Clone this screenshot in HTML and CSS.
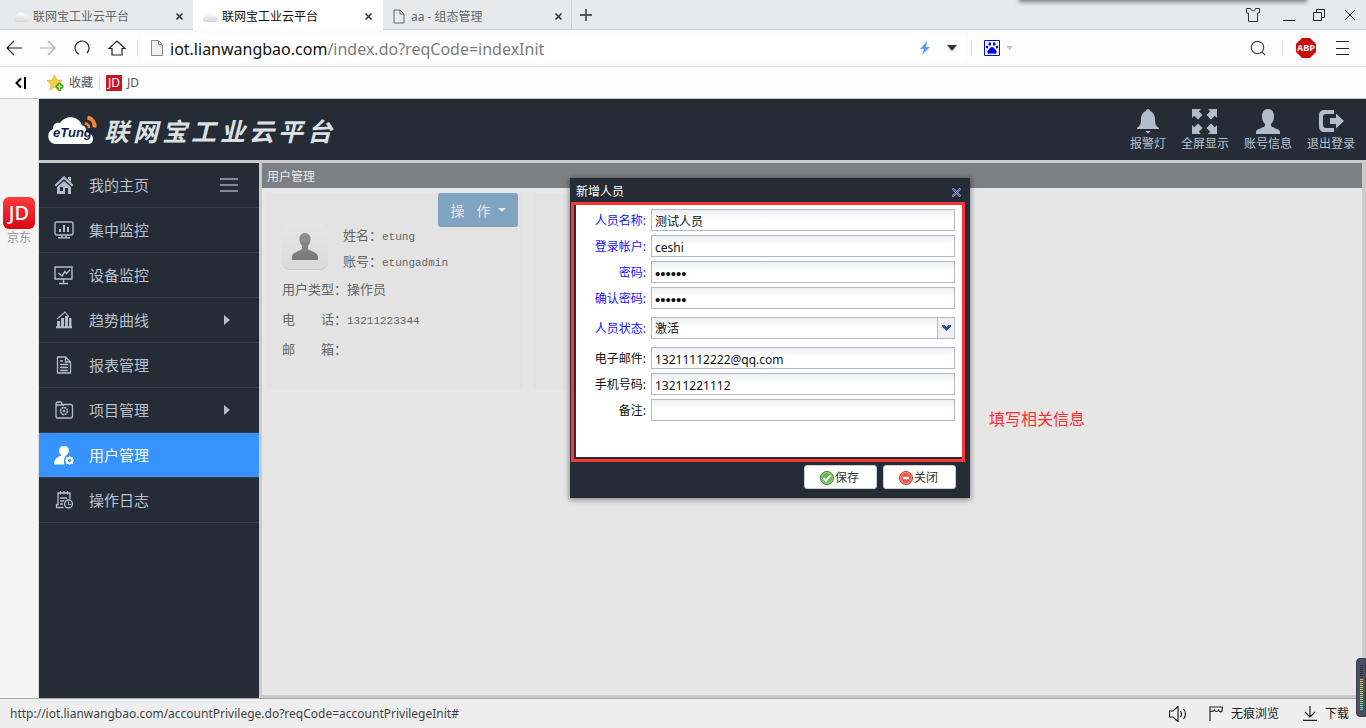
FILE: index.html
```html
<!DOCTYPE html>
<html lang="zh-CN">
<head>
<meta charset="utf-8">
<title>联网宝工业云平台</title>
<link rel="stylesheet" href="styles.css">
</head>
<body>
<div class="browser">
  <div class="tabstrip">
    <div class="tab">
      <svg class="cloud-ico" viewBox="0 0 18 12"><path d="M4 11a3 3 0 0 1-.5-5.500A5 5 0 0 1 13 4.500a3.300 3.300 0 0 1 1.500 6.500z" fill="url(#cg)"/><defs><linearGradient id="cg" x1="0" y1="0" x2="0" y2="1"><stop offset="0" stop-color="#fff"/><stop offset="1" stop-color="#d6d6d6"/></linearGradient></defs></svg>
      <span class="tab-title">联网宝工业云平台</span>
      <button class="tab-close" aria-label="关闭标签"><svg width="9" height="9" viewBox="0 0 9 9"><path d="M1.500 1.500l6 6M7.500 1.500l-6 6" stroke="#333" stroke-width="1.600"/></svg></button>
    </div>
    <div class="tab tab-active">
      <svg class="cloud-ico" viewBox="0 0 18 12"><path d="M4 11a3 3 0 0 1-.5-5.500A5 5 0 0 1 13 4.500a3.300 3.300 0 0 1 1.500 6.500z" fill="url(#cg)"/></svg>
      <span class="tab-title">联网宝工业云平台</span>
      <button class="tab-close" aria-label="关闭标签"><svg width="9" height="9" viewBox="0 0 9 9"><path d="M1.500 1.500l6 6M7.500 1.500l-6 6" stroke="#333" stroke-width="1.600"/></svg></button>
    </div>
    <div class="tab tab-last">
      <svg class="page-ico" viewBox="0 0 12 15"><path d="M1 1h6l4 4v9H1zM7 1v4h4" fill="none" stroke="#666"/></svg>
      <span class="tab-title">aa - 组态管理</span>
      <button class="tab-close" aria-label="关闭标签"><svg width="9" height="9" viewBox="0 0 9 9"><path d="M1.500 1.500l6 6M7.500 1.500l-6 6" stroke="#333" stroke-width="1.600"/></svg></button>
    </div>
    <button class="new-tab" aria-label="新建标签"><svg width="12" height="12" viewBox="0 0 12 12"><path d="M6 0v12M0 6h12" stroke="#555" stroke-width="1.800"/></svg></button>
    <div class="window-tools">
      <button aria-label="皮肤"><svg width="16" height="16" viewBox="0 0 16 16"><path d="M1.500 1.500h4c.5 3 4.500 3 5 0h4v4.500h-2v8.500h-9V6h-2z" fill="none" stroke="#333"/></svg></button>
      <button aria-label="最小化"><svg width="12" height="14" viewBox="0 0 12 14"><path d="M0 12.500h12" stroke="#222"/></svg></button>
      <button aria-label="还原"><svg width="13" height="13" viewBox="0 0 13 13"><path d="M.5 3.500h8v8h-8zM3.500 3.500v-3h8v8h-3" fill="none" stroke="#222"/></svg></button>
      <button aria-label="关闭窗口"><svg width="12" height="12" viewBox="0 0 12 12"><path d="M1 1l10 10M11 1L1 11" stroke="#222"/></svg></button>
    </div>
    <div class="top-shadow"></div>
  </div>

  <div class="toolbar">
    <div class="nav-tools">
      <button aria-label="后退"><svg width="16" height="16" viewBox="0 0 16 16"><path d="M8 1L1 8l7 7M1 8h15" fill="none" stroke="#222" stroke-width="1.200"/></svg></button>
      <button aria-label="前进"><svg width="16" height="16" viewBox="0 0 16 16"><path d="M8 1l7 7-7 7M0 8h15" fill="none" stroke="#aaa" stroke-width="1.200"/></svg></button>
      <button aria-label="刷新"><svg width="16" height="16" viewBox="0 0 16 16"><path d="M5 14.300A7 7 0 1 1 13 13" fill="none" stroke="#222" stroke-width="1.200"/></svg></button>
      <button aria-label="主页"><svg width="18" height="16" viewBox="0 0 18 16"><path d="M1 8.500l8-7.500 8 7.500h-3V15H4V8.500z" fill="none" stroke="#222" stroke-width="1.200"/></svg></button>
    </div>
    <div class="address">
      <svg width="12" height="16" viewBox="0 0 12 16"><path d="M.5.500h7l4 4v11H.5zM7.500.500v4h4" fill="#f0f0f0" stroke="#888"/></svg>
      <div class="url" role="textbox" aria-label="地址" contenteditable="true" spellcheck="false"><span class="host">iot.lianwangbao.com</span>/index.do?reqCode=indexInit</div>
      <svg class="bolt" width="10" height="14" viewBox="0 0 10 14"><path d="M7 0L0 8h4l-2 6 8-8H6z" fill="#4da3ff"/></svg>
      <svg width="10" height="6" viewBox="0 0 10 6"><path d="M0 0h10L5 6z" fill="#333"/></svg>
    </div>
    <div class="search">
      <svg width="16" height="16" viewBox="0 0 16 16"><path d="M.5.500h15v15H.5z" fill="#fff" stroke="#00f"/><g fill="#00f"><path d="M8 7c2 0 2.500 2 4 3.200 1.400 1.200.5 3.800-1.500 3.500-1.800-.3-3.200-.3-5 0-2 .3-2.900-2.300-1.500-3.500C5.500 9 6 7 8 7z"/><ellipse cx="5.800" cy="4" rx="1.400" ry="1.700"/><ellipse cx="10.200" cy="4" rx="1.400" ry="1.700"/><ellipse cx="3" cy="7" rx="1.200" ry="1.500"/><ellipse cx="13" cy="7" rx="1.200" ry="1.500"/></g></svg>
      <svg width="7" height="4" viewBox="0 0 7 4"><path d="M0 0h7L3.500 4z" fill="#bcc6dc"/></svg>
      <input type="search" aria-label="搜索">
      <button aria-label="搜索"><svg width="16" height="16" viewBox="0 0 16 16"><circle cx="7.500" cy="7.500" r="6.200" fill="none" stroke="#444" stroke-width="1.200"/><path d="M12 12l3 3" stroke="#444" stroke-width="1.200"/></svg></button>
    </div>
    <div class="ext-tools">
      <button aria-label="ABP"><svg width="20" height="20" viewBox="0 0 20 20"><path d="M6 0h8l6 6v8l-6 6H6l-6-6V6z" fill="#cb0b0b"/><text x="10" y="13" text-anchor="middle" class="abp">ABP</text></svg></button>
      <button aria-label="菜单"><svg width="13" height="14" viewBox="0 0 13 14"><path d="M0 .5h13M0 7.500h13M0 13.500h13" stroke="#222"/></svg></button>
    </div>
  </div>

  <div class="bookmarks">
    <button class="collapse" aria-label="收起"><svg width="11" height="12" viewBox="0 0 11 12"><path d="M6 1.500L1.500 6 6 10.500M10 0v12" fill="none" stroke="#000" stroke-width="2"/></svg></button>
    <a href="#" class="fav"><svg width="17" height="16" viewBox="0 0 17 16"><path d="M7.500 0l2.300 5 5.200.5-4 3.600L12.200 15 7.500 12 2.800 15 4 9.200 0 5.600l5.200-.6z" fill="#fbcf4c" stroke="#dba62e" stroke-width=".7"/><path d="M11 8h3v2h2v3h-2v2.500h-3V13H9v-3h2z" fill="#68bf30" stroke="#338a18" stroke-width=".7"/><path d="M12.500 9.500v5M10 11.500h5" stroke="#d2f6b3"/></svg>收藏</a>
    <a href="#" class="jd-link"><span class="jd-small">JD</span>JD</a>
  </div>

  <div class="stage">
    <aside class="rail">
      <a href="#" class="rail-app"><span class="jd-big">JD</span>京东</a>
    </aside>

    <div class="app">
      <header class="app-head">
        <div class="brand">
          <svg class="logo" width="52" height="32" viewBox="0 0 52 32"><path d="M7 30a8 8 0 0 1-1-15C6 10 9 8 13 9 18 1 31 1 35 11c3 1 5 4 4 7 4 1 7 3 7 7 0 3-2 5-5 5z" fill="#fff"/><text x="6" y="23" class="logo-text">eTung</text><circle cx="41" cy="23" r="1" fill="#7886a5"/><path d="M37.500 9.500c3 0 4.500 1.500 4.500 4.500" fill="none" stroke="#f58534" stroke-width="2.600"/><path d="M40.500 3.500c5 1 7.500 5 7 10" fill="none" stroke="#f58534" stroke-width="4"/></svg>
          <h1 class="brand-name"><span>联</span><span>网</span><span>宝</span><span>工</span><span>业</span><span>云</span><span>平</span><span>台</span></h1>
        </div>
        <nav class="head-tools">
          <a href="#"><svg width="24" height="25" viewBox="0 0 24 25"><path d="M12 0c1 0 2 .8 2 2 3 1 5 4 5 8 0 5 1 7 4 9v1H1v-1c3-2 4-4 4-9 0-4 2-7 5-8 0-1.200 1-2 2-2zM9.500 22h5L12 24.500z"/></svg>报警灯</a>
          <a href="#"><svg width="25" height="25" viewBox="0 0 25 25"><path d="M0 0h9L6.800 2.200l3.700 3.800-4.500 4.500-3.800-3.700L0 9zM25 0v9l-2.200-2.200-3.800 3.700L14.500 6l3.700-3.800L16 0zM0 25v-9l2.200 2.200L6 14.500l4.500 4.500-3.700 3.800L9 25zM25 25h-9l2.200-2.200-3.700-3.800 4.500-4.500 3.800 3.700L25 16z"/></svg>全屏显示</a>
          <a href="#"><svg width="24" height="25" viewBox="0 0 24 25"><path d="M12 0c4 0 6 3 6 7 0 4-1 6-3 8v2c2 2 9 3 9 6v2H0v-2c0-3 7-4 9-6v-2C7 13 6 11 6 7c0-4 2-7 6-7z"/></svg>账号信息</a>
          <a href="#"><svg width="26" height="24" viewBox="0 0 26 24"><path d="M16 1H7C3 1 1 3 1 6v11c0 4 2 6 6 6h9v-4H8c-2 0-3-1-3-3V8c0-2 1-3 3-3h8z"/><path d="M12 9h6V4.500l8 7.500-8 7.500V15h-6z"/></svg>退出登录</a>
        </nav>
      </header>

      <div class="app-body">
        <nav class="side">
          <a href="#" class="item"><svg class="mi" viewBox="0 0 20 20"><path d="M10 1l9.500 9-1.500 1.500-8-7.500-8 7.500L.5 10zM14 2h3v5l-3-3z" fill="#b2bcca"/><path d="M10 6l7 6v7h-3v-6h-3v6H3v-7zM6 12v4h3v-4z" fill="#b2bcca" fill-rule="evenodd"/></svg><span>我的主页</span><svg width="18" height="14" viewBox="0 0 18 14"><path d="M0 1h18M0 7h18M0 13h18" stroke="#a0a8b4" stroke-width="1.500"/></svg></a>
          <a href="#" class="item"><svg class="mi" viewBox="0 0 20 20"><path d="M3 2h14q2 0 2 2v9q0 2-2 2H3q-2 0-2-2V4q0-2 2-2zM4 17.700h12M8 15v3M12 15v3" fill="none" stroke="#b2bcca" stroke-width="1.400"/><path d="M6 12V9M10 12V5M14 12V7" stroke="#b2bcca" stroke-width="2"/></svg><span>集中监控</span></a>
          <a href="#" class="item"><svg class="mi" viewBox="0 0 20 20"><path d="M1 2h17v12H1zM9.500 14v4M5 18.500h9M4.500 8L8 11l3-4.500 1.500 2L16 5" fill="none" stroke="#b2bcca" stroke-width="1.400"/></svg><span>设备监控</span></a>
          <a href="#" class="item"><svg class="mi" viewBox="0 0 20 20"><path d="M2 17.300h16" stroke="#b2bcca" stroke-width="2"/><path d="M3 17v-6h3v6zM7 17V8h3v9zM11 17V6h3v11zM15 17V8h2.500v9z" fill="#b2bcca"/><path d="M3 9l7-6 1-1 4 5" fill="none" stroke="#b2bcca" stroke-width="1.100"/></svg><span>趋势曲线</span><svg class="arrow" width="6" height="10" viewBox="0 0 6 10"><path d="M0 0l6 5-6 5z" fill="#b2bcca"/></svg></a>
          <a href="#" class="item"><svg class="mi" viewBox="0 0 20 20"><path d="M3.500 2h8l5 5v11h-13zM11.500 2v5h5M6 6h3M6 9.500h8M6 12.500h8M6 15.500h8" fill="none" stroke="#b2bcca" stroke-width="1.300"/></svg><span>报表管理</span></a>
          <a href="#" class="item"><svg class="mi" viewBox="0 0 20 20"><path d="M2 5.500V4q0-2 2-2h3l1.500 2.500H17q1.500 0 1.500 2V16q0 2-2 2H3.500Q2 18 2 16zM2 5h8" fill="none" stroke="#b2bcca" stroke-width="1.300"/><circle cx="10" cy="11" r="3.500" fill="none" stroke="#b2bcca" stroke-width="1.500" stroke-dasharray="2.200 .5"/><circle cx="10" cy="11" r="1.300" fill="#b2bcca"/></svg><span>项目管理</span><svg class="arrow" width="6" height="10" viewBox="0 0 6 10"><path d="M0 0l6 5-6 5z" fill="#b2bcca"/></svg></a>
          <a href="#" class="item item-on"><svg class="mi" viewBox="0 0 20 20"><path d="M10 1c3 0 5 2 5 4.500S13 10 11.500 11c-1 2-2 4-1 8.500H0c0-5 3-8 7.500-9C6 9 5 7.500 5 5.500 5 3 7 1 10 1z" fill="#fff"/><circle cx="15.500" cy="15.500" r="2.600" fill="none" stroke="#fff" stroke-width="2"/><path d="M15.500 11v1.500M15.500 18.500V20M11 15.500h1.500M18.500 15.500H20M12.300 12.300l1 1M17.700 17.700l1 1M18.700 12.300l-1 1M12.300 18.700l1-1" stroke="#fff" stroke-width="1.700"/></svg><span>用户管理</span></a>
          <a href="#" class="item"><svg class="mi" viewBox="0 0 20 20"><path d="M9.500 17.500h-7v-3H4V3h12v6M6.500 1v3.500M10 1v3.500M13.500 1v3.500M6 8h7M6 11h4M6 14h3" fill="none" stroke="#b2bcca" stroke-width="1.300"/><circle cx="14.500" cy="14" r="4" fill="none" stroke="#b2bcca" stroke-width="1.400"/><path d="M14.500 11.500v3h2.500" fill="none" stroke="#b2bcca"/></svg><span>操作日志</span></a>
        </nav>

        <main class="panel">
          <h2 class="panel-title">用户管理</h2>
          <div class="cards">
            <section class="card">
              <button class="op"><span>操</span><span>作</span><svg width="8" height="4" viewBox="0 0 8 4"><path d="M0 0h8L4 4z" fill="#e6e6e6"/></svg></button>
              <div class="who">
                <div class="avatar"><svg width="26" height="27" viewBox="0 0 26 27"><path d="M13 0c4 0 6 3 5.500 7-.3 3-1.500 5-2.500 6v3c2 2 10 3 10 8v3H0v-3c0-5 8-6 10-8v-3c-1-1-2.200-3-2.500-6C7 3 9 0 13 0z" fill="url(#ag)"/><defs><linearGradient id="ag" x1="0" y1="0" x2="0" y2="1"><stop offset="0" stop-color="#929292"/><stop offset="1" stop-color="#777"/></linearGradient></defs></svg></div>
                <div class="who-text"><p>姓名：<span class="mono">etung</span></p><p>账号：<span class="mono">etungadmin</span></p></div>
              </div>
              <p class="line">用户类型：操作员</p>
              <p class="line">电　　话：<span class="mono">13211223344</span></p>
              <p class="line">邮　　箱：</p>
            </section>
            <section class="card"></section>
          </div>
        </main>
      </div>

      <form class="dialog" role="dialog" aria-labelledby="dlg-title">
        <div class="dlg-head"><h3 id="dlg-title">新增人员</h3><button type="button" aria-label="关闭对话框"><svg width="9" height="9" viewBox="0 0 9 9"><path d="M.5.500l8 8M8.500.500l-8 8" stroke="#8fa3e6" stroke-width="2.200"/><path d="M1 1l7 7M8 1L1 8" stroke="#252c36" stroke-width=".7"/></svg></button></div>
        <div class="dlg-body">
          <div class="row req"><label for="f1">人员名称:</label><input id="f1" type="text" value="测试人员"></div>
          <div class="row req"><label for="f2">登录帐户:</label><input id="f2" type="text" value="ceshi"></div>
          <div class="row req"><label for="f3">密码:</label><input id="f3" type="password" value="123456"></div>
          <div class="row req"><label for="f4">确认密码:</label><input id="f4" type="password" value="123456"></div>
          <div class="row req row-combo"><label for="f5">人员状态:</label><div class="combo"><select id="f5"><option>激活</option></select><span class="combo-btn"><svg width="9" height="6" viewBox="0 0 9 6"><path d="M0 0h2.500l2 2 2-2H9v1.500L4.500 6 0 1.500z" fill="#2f4f8f"/></svg></span></div></div>
          <div class="row"><label for="f6">电子邮件:</label><input id="f6" type="text" value="13211112222@qq.com"></div>
          <div class="row"><label for="f7">手机号码:</label><input id="f7" type="text" value="13211221112"></div>
          <div class="row"><label for="f8">备注:</label><input id="f8" type="text" value=""></div>
        </div>
        <div class="dlg-foot">
          <button type="button"><svg width="14" height="14" viewBox="0 0 14 14"><circle cx="7" cy="7" r="6.500" fill="#64b64e" stroke="#2f7d26"/><circle cx="7" cy="7" r="5.400" fill="none" stroke="#b4e3a2" stroke-width=".8"/><path d="M3.500 7l2.500 2.700L10.500 4.500" fill="none" stroke="#fff" stroke-width="2"/></svg>保存</button>
          <button type="button"><svg width="14" height="14" viewBox="0 0 14 14"><circle cx="7" cy="7" r="6.500" fill="#e8584b" stroke="#c03a2c"/><circle cx="7" cy="7" r="5.400" fill="none" stroke="#f6ab9f" stroke-width=".8"/><path d="M4 7h6" stroke="#fff" stroke-width="2.400"/></svg>关闭</button>
        </div>
        <div class="mark"></div>
      </form>
      <p class="note">填写相关信息</p>
    </div>
  </div>

  <footer class="status">
    <span class="status-url">http://iot.lianwangbao.com/accountPrivilege.do?reqCode=accountPrivilegeInit#</span>
    <button aria-label="声音"><svg width="18" height="16" viewBox="0 0 18 16"><path d="M.5 5h3.500l5-4.500v15L4 11H.5zM11.500 5q2 3 0 6M14.500 3q4 5 0 10" fill="none" stroke="#222" stroke-width="1.200"/></svg></button>
    <button class="incog"><svg width="14" height="15" viewBox="0 0 14 15"><path d="M1 15V1h12.500L13 5q-2 2-3.500-1Q7.500 7 5.500 4 4 6 1 5" fill="none" stroke="#222" stroke-width="1.200"/></svg>无痕浏览</button>
    <button class="down"><svg width="14" height="15" viewBox="0 0 14 15"><path d="M7 0v11M2 6l5 5 5-5M0 14.300h14" fill="none" stroke="#222" stroke-width="1.200"/></svg>下载</button>
  </footer>
  <div class="meter"><i class="meter-off"></i><i class="meter-on"></i></div>
</div>
</body>
</html>
```
FILE: styles.css
```css
* { box-sizing: border-box; }
body { margin: 0; font: 12px/16px "Noto Sans", "Noto Sans CJK SC", sans-serif; color: #333; overflow: hidden; }
h1, h2, h3, p { margin: 0; font-weight: normal; }
button { font: inherit; color: inherit; background: none; border: 0; padding: 0; display: flex; align-items: center; justify-content: center; }
a { color: inherit; text-decoration: none; }
svg { flex: none; display: block; }

.browser { position: relative; display: flex; flex-direction: column; height: 100vh; background: #fcfcfc; }

.tabstrip { position: relative; display: flex; align-items: stretch; height: 30px; background: #e8e9eb; border-bottom: 1px solid #cfd1d4; }
.tab { display: flex; align-items: center; width: 190px; padding: 4px 9px 0 12px; color: #666; }
.tab:first-child { width: 193px; }
.tab-active { background: #fff; color: #111; margin-bottom: -1px; padding: 3px 10px 0 8px; }
.tab-last { width: 189px; border-right: 1px solid #cfd1d4; padding: 4px 8px 0 10px; }
.tab-title { flex: 1; margin-left: 3px; }
.tab-last .tab-title { margin-left: 6px; }
.tab-close { width: 9px; height: 9px; }
.cloud-ico { width: 18px; height: 12px; }
.page-ico { width: 12px; height: 15px; }
.new-tab { width: 27px; }
.window-tools { display: flex; align-items: center; gap: 18px; margin-left: auto; padding: 1px 10px 0 0; }
.window-tools button:first-child { margin-right: 4px; }
.top-shadow { position: absolute; top: -6px; right: 60px; width: 286px; height: 6px; box-shadow: 0 1px 4px 1px #777; }

.toolbar { display: flex; align-items: center; height: 37px; border-bottom: 1px solid #dedede; }
.nav-tools { display: flex; align-items: center; gap: 18px; width: 138px; padding-left: 6px; height: 16px; border-right: 1px solid #ddd; }
.address { display: flex; align-items: center; flex: 1; background: #fff; height: 27px; margin-left: 5px; padding: 0 9px 0 8px; }
.url { flex: 1; margin-left: 7px; padding-top: 1px; font: 16px/24px "Noto Sans", sans-serif; color: #7c7c7c; white-space: nowrap; outline: 0; }
.host { color: #111; }
.bolt { margin-right: 17px; }
.search { display: flex; align-items: center; width: 312px; padding: 0 16px 0 12px; border-left: 1px solid #ddd; border-right: 1px solid #ddd; height: 16px; margin-left: 5px; }
.search input { flex: 1; min-width: 0; border: 0; background: none; outline: 0; font: inherit; }
.search svg + svg { margin-left: 6px; }
.ext-tools { display: flex; align-items: center; gap: 20px; padding: 0 17px 0 13px; }
.abp { font: bold 9px "Open Sans", sans-serif; fill: #fff; }

.bookmarks { display: flex; align-items: center; height: 32px; border-bottom: 1px solid #c4c6c6; color: #555; }
.collapse { margin: 0 21px 0 15px; }
.fav { display: flex; align-items: center; gap: 5px; padding-right: 6px; border-right: 1px solid #ddd; height: 14px; }
.jd-link { display: flex; align-items: center; gap: 5px; margin-left: 6px; }
.jd-small { width: 16px; height: 16px; background: #c81623; color: #fff; font: 12px/16px "Noto Sans", sans-serif; text-align: center; }

.stage { flex: 1; display: flex; min-height: 0; }
.rail { width: 39px; background: #f5f5f5; border-right: 1px solid #ddd; padding-top: 98px; }
.rail-app { display: flex; flex-direction: column; align-items: center; color: #999; gap: 1px; }
.jd-big { width: 32px; height: 32px; border-radius: 6px; background: linear-gradient(#ff3b3b, #d90718); color: #fff; font: 500 20px/32px "Noto Sans", sans-serif; text-align: center; }

.app { position: relative; flex: 1; min-width: 0; display: flex; flex-direction: column; gap: 3px; background: #cbcbcb; }
.app-head { display: flex; align-items: center; justify-content: space-between; height: 61px; background: #252c36; padding: 0 11px 0 8px; }
.brand { display: flex; align-items: center; gap: 5px; }
.logo-text { font: italic bold 13px "Liberation Sans", sans-serif; fill: #101c4c; }
.brand-name { display: flex; gap: 4px; font: italic bold 25px/32px "Noto Sans CJK SC", sans-serif; color: #dbe0e5; }
.head-tools { display: flex; gap: 15px; color: #b8c2cf; }
.head-tools a { display: flex; flex-direction: column; align-items: center; justify-content: space-between; height: 44px; padding-top: 1px; line-height: 16px; }
.head-tools svg { fill: #b2bcca; }

.app-body { flex: 1; display: flex; gap: 3px; padding-right: 4px; padding-bottom: 3px; min-height: 0; }
.side { width: 220px; background: #252c36; margin-bottom: -3px; }
.item { display: flex; align-items: center; height: 45px; padding: 0 21px 0 15px; border-bottom: 1px solid #363d47; color: #b8c2cf; font-size: 15px; line-height: 20px; }
.item span { flex: 1; margin-left: 15px; }
.mi { width: 20px; height: 20px; }
.item-on { background: #3793ff; color: #fff; }
.arrow { margin-right: 8px; }

.panel { flex: 1; background: #e6e6e6; }
.panel-title { height: 25px; padding-left: 5px; background: #7c7f83; color: #e8e8e8; font-size: 12px; line-height: 27px; }
.cards { display: flex; gap: 10px; padding: 5px; }
.card { width: 256px; height: 196px; background: #e3e3e3; padding: 0 5px 0 15px; display: flex; flex-direction: column; color: #666; font: 13px/20px "Noto Sans CJK SC", sans-serif; }
.op { align-self: flex-end; width: 80px; height: 34px; background: #81a3c2; color: #e6e6e6; border-radius: 3px; gap: 12px; font-size: 14px; }
.op svg { margin-left: -5px; }
.who { display: flex; gap: 15px; margin-bottom: 8px; }
.avatar { width: 46px; height: 46px; border-radius: 8px; background: linear-gradient(#e6e6e6, #dadada); border-bottom: 1px solid #c7cbcb; display: flex; align-items: center; justify-content: center; margin-top: -3px; }
.who-text { display: flex; flex-direction: column; gap: 6px; margin-top: -2px; }
.mono { font: 11px/16px "Liberation Mono", monospace; }
.line { margin-bottom: 10px; }

.dialog { position: absolute; left: 531px; top: 79px; width: 400px; background: #252c36; box-shadow: 0 1px 5px 1px rgba(0, 0, 0, .4); }
.dlg-head { display: flex; align-items: center; justify-content: space-between; height: 26px; padding: 2px 9px 0 6px; }
.dlg-head h3 { font-size: 12px; line-height: 16px; color: #fff; }
.dlg-body { margin: 0 5px 0 6px; padding: 5px 10px 36px; background: #fff; display: flex; flex-direction: column; gap: 4px; }
.row { display: flex; align-items: center; gap: 5px; height: 22px; color: #111; }
.row label { width: 60px; padding-top: 2px; text-align: right; white-space: nowrap; }
.req label { color: #1414ff; }
.row-combo { margin: 4px 0; }
.row input, .row select { flex: 1; min-width: 0; height: 22px; width: 100%; padding: 2px 3px 0; border: 1px solid #b5b8c8; border-radius: 0; background: linear-gradient(#eceff0, #fff 9px); font: 12px/18px "Noto Sans", "Noto Sans CJK SC", sans-serif; color: #111; outline: 0; }
.row input[type="password"] { font-family: "Liberation Sans", sans-serif; font-size: 15px; }
.combo { position: relative; flex: 1; }
.row select { display: block; appearance: none; }
.combo-btn { position: absolute; top: 1px; right: 0; width: 18px; height: 21px; background: #f0f0f0; border: 1px solid #b5b8c8; border-width: 0 1px 1px; display: flex; align-items: center; justify-content: center; pointer-events: none; }
.dlg-foot { display: flex; justify-content: flex-end; gap: 6px; padding: 8px 14px 9px; }
.dlg-foot button { width: 73px; height: 24px; padding: 1px 2px 0 0; background: #fff; border: 1px solid #d0d0d0; border-radius: 3px; gap: 1px; }
.mark { position: absolute; left: 1px; top: 24px; width: 394px; height: 260px; border: 3px solid #ff3636; pointer-events: none; }
.note { position: absolute; left: 950px; top: 308px; font-size: 16px; line-height: 24px; color: #ff3030; }

.status { display: flex; align-items: center; height: 30px; background: #eee; border-top: 1px solid #aaa; padding: 0 17px 0 10px; }
.status-url { flex: 1; color: #444; }
.incog, .down { gap: 8px; color: #222; }
.incog { margin: 0 24px 0 22px; }
.meter { position: absolute; right: 0; bottom: 11px; width: 10px; height: 59px; padding: 6px 2px 6px 3px; border-radius: 4px 0 0 4px; background: #4a5061; border: 1px solid #3a3f4c; display: flex; flex-direction: column; }
.meter i { display: block; }
.meter-off { height: 14px; background: repeating-linear-gradient(#2d313c 0 1px, transparent 1px 2px); }
.meter-on { flex: 1; background: repeating-linear-gradient(transparent 0 1px, #4a5061 1px 2px), linear-gradient(#e8bd5c, #c5d673 50%, #55d6c2); }
```
